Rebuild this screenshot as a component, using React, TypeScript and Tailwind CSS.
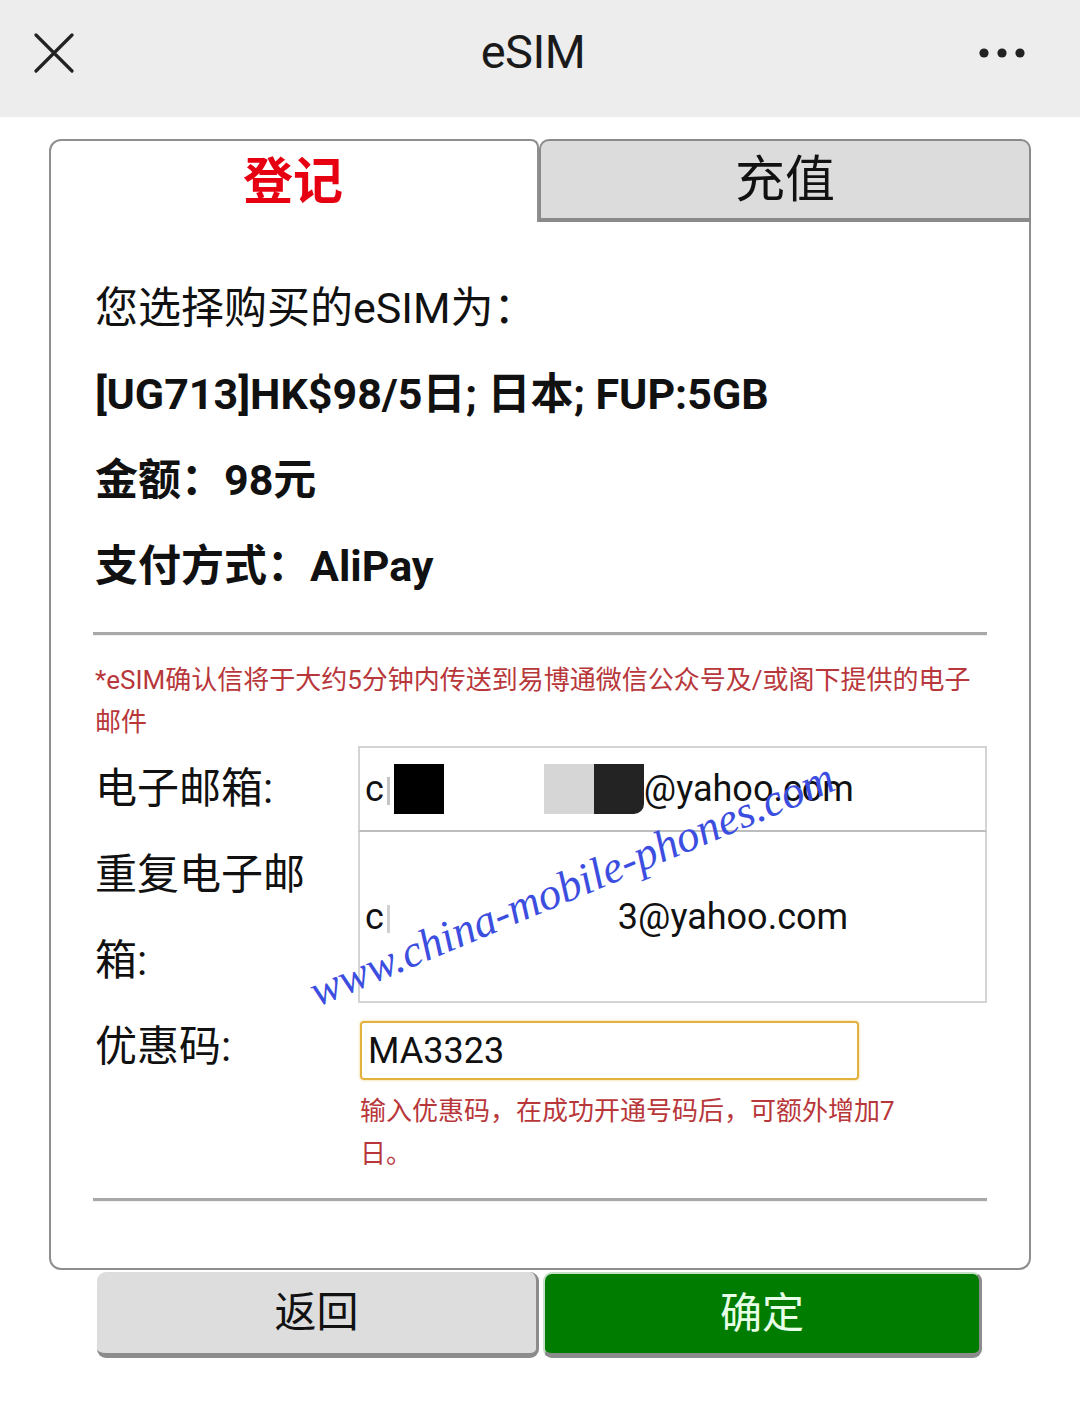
const font = "font-['Roboto','Noto_Sans_CJK_SC',sans-serif]";

function CloseIcon() {
  return (
    <svg width="40" height="40" viewBox="0 0 40 40">
      <path d="M2 2 L38 38 M38 2 L2 38" stroke="#222" strokeWidth="3.2" strokeLinecap="round" />
    </svg>
  );
}

function MoreIcon() {
  return (
    <svg width="50" height="12" viewBox="0 0 50 12">
      <circle cx="6" cy="6" r="4.6" fill="#222" />
      <circle cx="24" cy="6" r="4.6" fill="#222" />
      <circle cx="42" cy="6" r="4.6" fill="#222" />
    </svg>
  );
}

function Rule() {
  return <div className="h-[4px] border-t-[3px] border-[#a8a8a8] bg-[#f2f2f2]" />;
}

export default function App() {
  return (
    <div className={`relative w-[1080px] h-[1423px] bg-white overflow-hidden text-[#111] ${font}`}>
      {/* 顶栏 */}
      <div className="h-[117px] bg-[#ededed] flex items-center justify-between pl-[34px] pr-[52px] pb-[12px]">
        <CloseIcon />
        <div className="text-[47px] text-[#1a1a1a] tracking-[-0.5px] ml-[14px]">eSIM</div>
        <MoreIcon />
      </div>

      {/* 卡片 */}
      <div className="ml-[49px] mt-[22px] w-[982px]">
        <div className="flex h-[83px]">
          <div className="w-[490px] bg-white border-2 border-b-0 border-[#8f8f8f] rounded-tl-[12px] rounded-tr-[8px] flex items-center justify-center">
            <span className="text-[50px] font-bold text-[#e60012] leading-none -ml-[2px]">登记</span>
          </div>
          <div className="flex-1 bg-[#dcdcdc] border-2 border-b-[4px] border-[#8a8a8a] rounded-t-[10px] flex items-center justify-center">
            <span className="text-[50px] leading-none text-[#111]">充值</span>
          </div>
        </div>

        <div className="border-2 border-t-0 border-[#8f8f8f] rounded-b-[12px] px-[42px] pt-[43px] pb-[66px]">
          <div className="text-[43px] leading-[86px] pl-[2px]">您选择购买的eSIM为：</div>
          <div className="text-[43px] leading-[86px] font-bold pl-[2px]">[UG713]HK$98/5日; 日本; FUP:5GB</div>
          <div className="text-[43px] leading-[86px] font-bold pl-[2px]">金额：98元</div>
          <div className="text-[43px] leading-[86px] font-bold pl-[2px]">支付方式：AliPay</div>

          <div className="mt-[23px]">
            <Rule />
          </div>

          <div className="mt-[23px] text-[26px] leading-[42px] text-[#b8373b] pl-[2px]">
            *eSIM确认信将于大约5分钟内传送到易博通微信公众号及/或阁下提供的电子邮件
          </div>

          {/* 表单 */}
          <div className="mt-[3px] flex flex-col">
            <div className="flex">
              <div className="w-[265px] text-[42px] leading-[86px] pl-[2px]">电子邮箱:</div>
              <div className="flex-1 h-[86px] border-2 border-[#d4d4d4] border-b-[#bdbdbd] flex items-center pl-[5px] text-[36px] text-[#111]">
                <span>c</span>
                <span className="inline-block w-[3px] h-[28px] bg-[#c4c4c4] ml-[3px] mt-[4px]" />
                <span className="inline-block w-[50px] h-[50px] bg-black ml-[4px]" />
                <span className="inline-block w-[100px] h-[50px] bg-white" />
                <span className="inline-block w-[50px] h-[50px] bg-[#d6d6d6]" />
                <span className="inline-block w-[50px] h-[50px] bg-[#232323] rounded-br-[10px]" />
                <span>@yahoo.com</span>
              </div>
            </div>
            <div className="flex">
              <div className="w-[265px] pl-[2px]">
                <div className="w-[236px] text-[42px] leading-[86px]">重复电子邮箱:</div>
              </div>
              <div className="flex-1 h-[171px] border-2 border-t-0 border-[#d4d4d4] flex items-center pl-[5px] text-[36px] text-[#111]">
                <span>c</span>
                <span className="inline-block w-[3px] h-[28px] bg-[#d0d0d0] ml-[3px] mt-[4px]" />
                <span className="inline-block w-[228px]" />
                <span>3@yahoo.com</span>
              </div>
            </div>
            <div className="flex">
              <div className="w-[267px] text-[42px] leading-[86px] pl-[2px]">优惠码:</div>
              <div className="flex-1 pt-[17px]">
                <div className="w-[499px] h-[59px] border-2 border-[#e2b23e] rounded-[4px] shadow-[0_0_3px_rgba(226,178,62,0.6)] flex items-center pl-[6px] text-[36px] text-[#111]">
                  MA3323
                </div>
                <div className="w-[548px] mt-[10px] text-[26px] leading-[43px] text-[#b8373b]">
                  输入优惠码，在成功开通号码后，可额外增加7日。
                </div>
              </div>
            </div>
          </div>

          <div className="mt-[22px]">
            <Rule />
          </div>
        </div>
      </div>

      {/* 按钮 */}
      <div className="ml-[97px] mt-[2px] flex gap-[4px]">
        <div className="w-[442px] h-[86px] bg-[#dddddd] rounded-[9px] border-b-[5px] border-r-[3px] border-[#8c8c8c] flex items-center justify-center">
          <span className="text-[42px] text-[#111]">返回</span>
        </div>
        <div className="w-[439px] h-[86px] bg-[#007d00] rounded-[9px] border-b-[5px] border-r-[3px] border-t-[2px] border-l-[2px] border-t-[#c8e0c8] border-l-[#c8e0c8] border-b-[#8c8c8c] border-r-[#8c8c8c] flex items-center justify-center">
          <span className="text-[42px] text-[#e8ffe8]">确定</span>
        </div>
      </div>

      {/* 水印 */}
      <div className="absolute left-[572px] top-[885px] -translate-x-1/2 -translate-y-1/2 rotate-[-22.7deg] whitespace-nowrap italic text-[45px] text-[#3c4ee0] font-['Liberation_Serif',serif] pointer-events-none">
        www.china-mobile-phones.com
      </div>
    </div>
  );
}
